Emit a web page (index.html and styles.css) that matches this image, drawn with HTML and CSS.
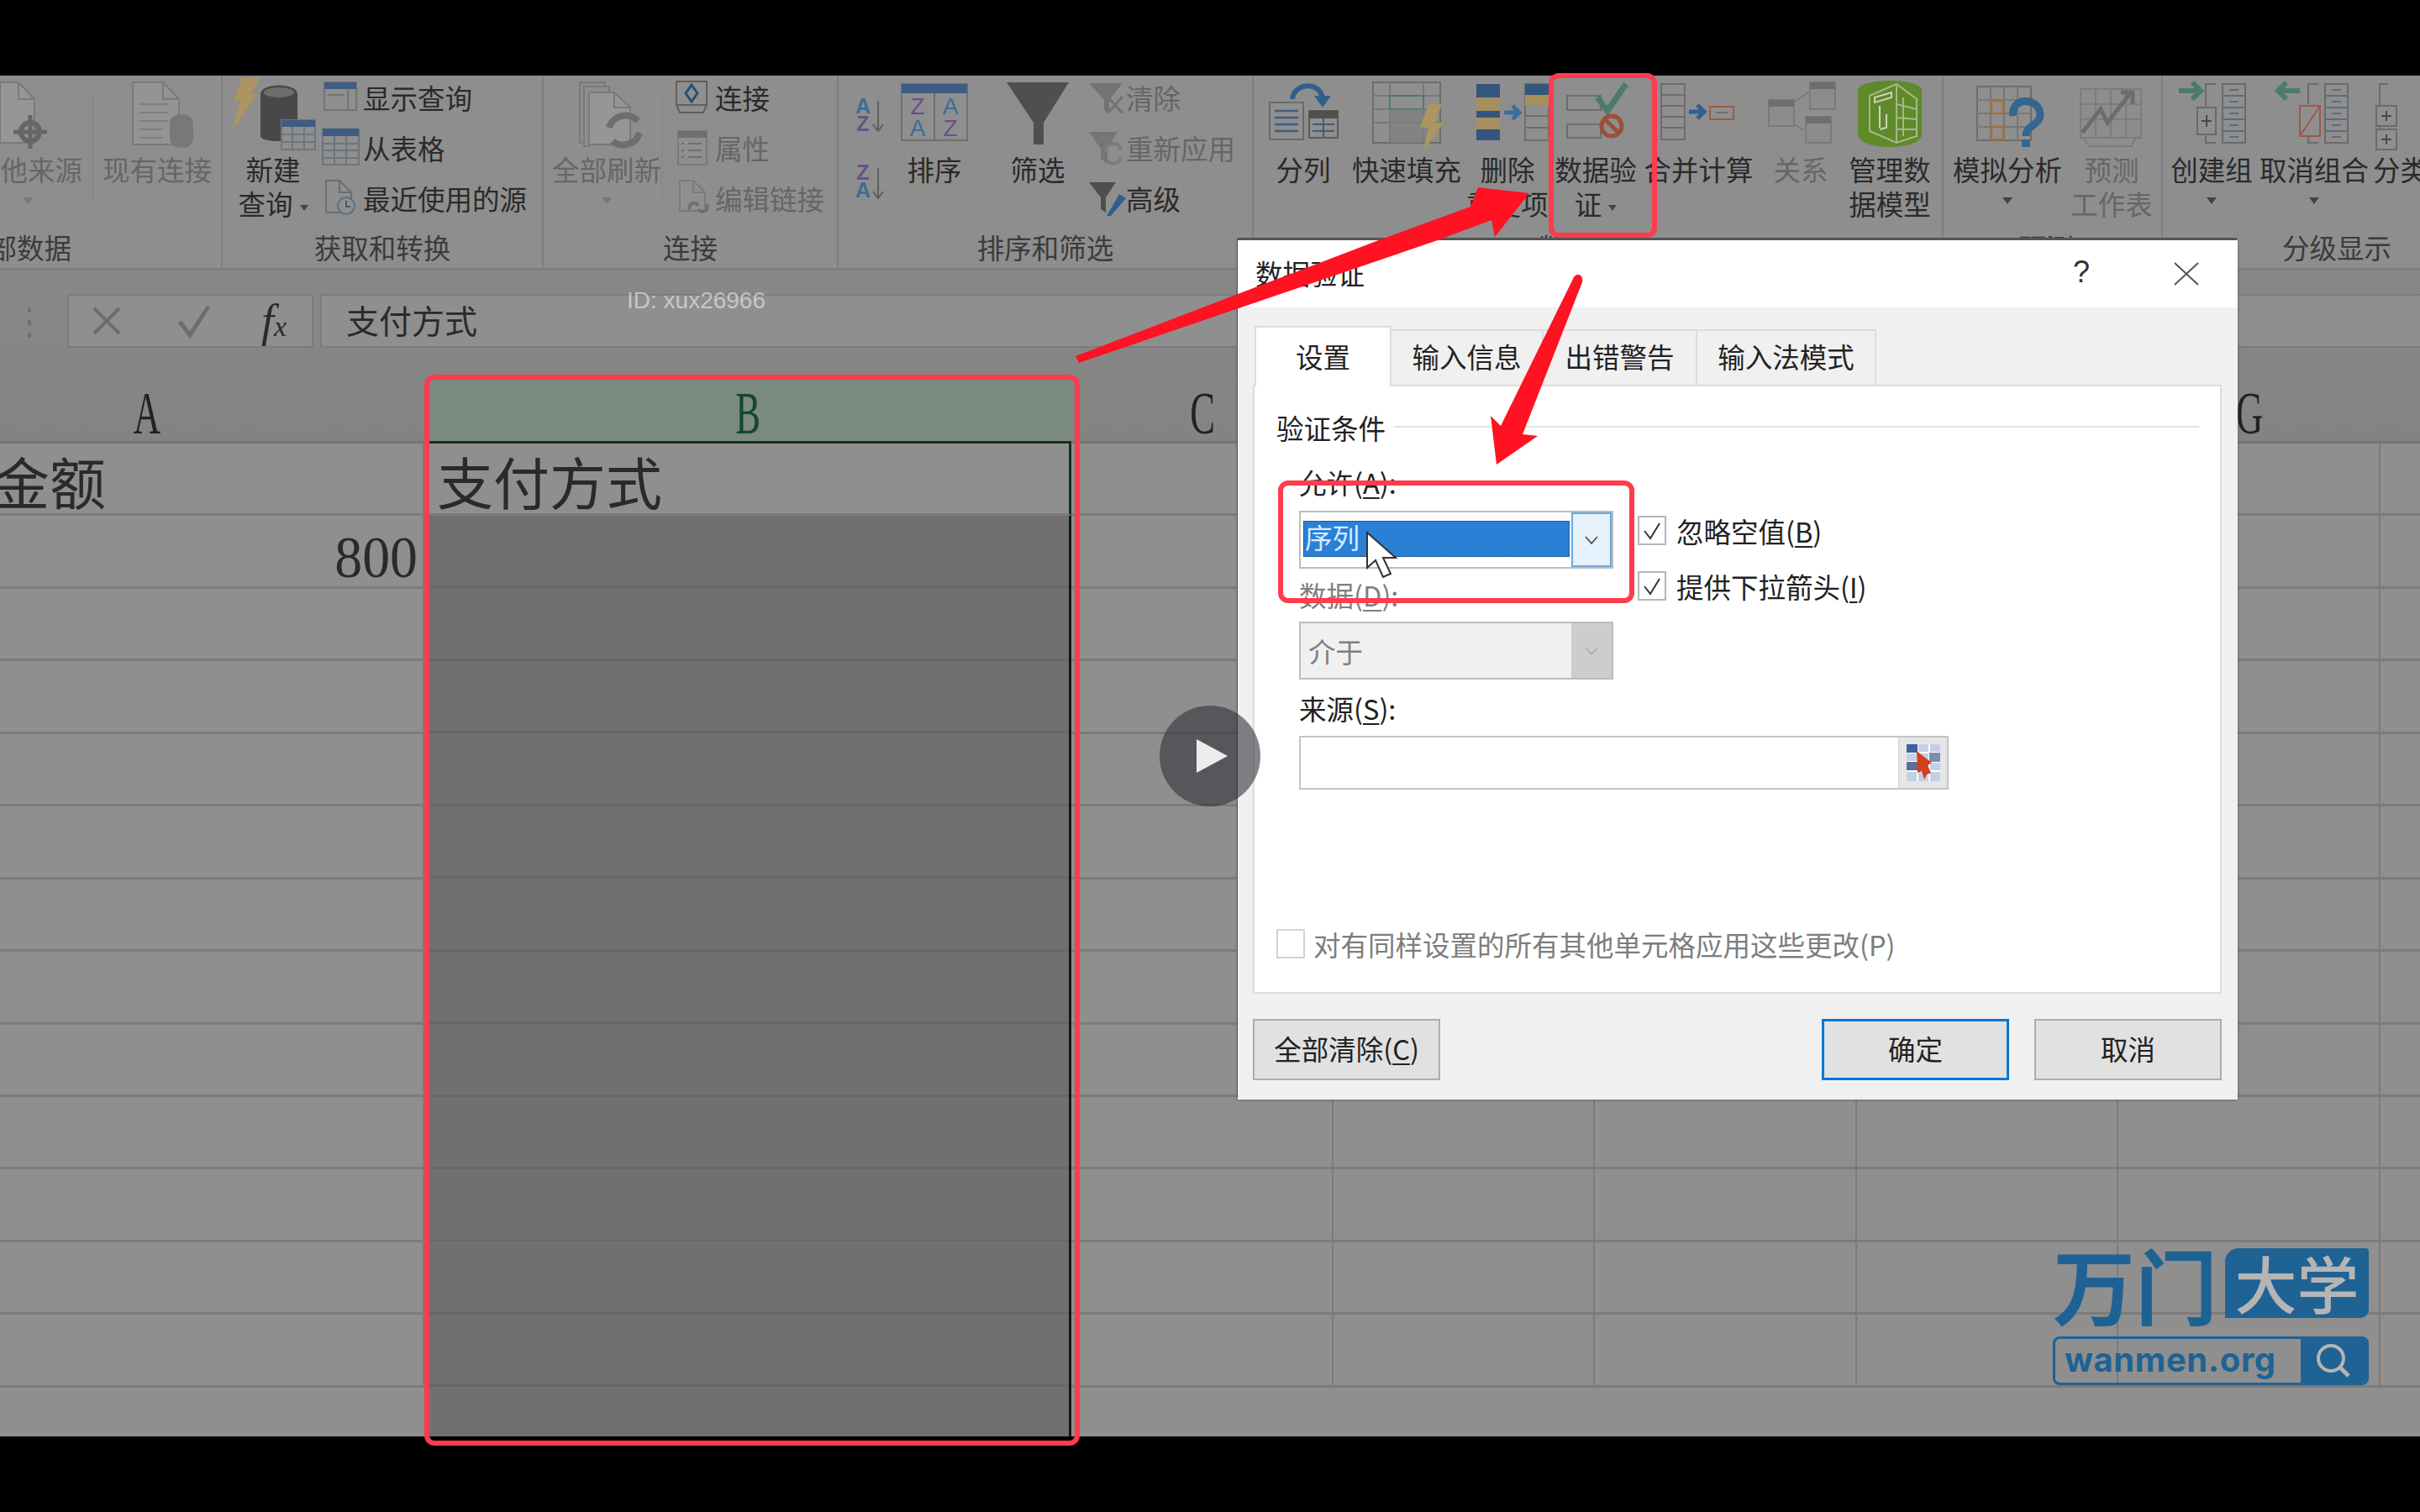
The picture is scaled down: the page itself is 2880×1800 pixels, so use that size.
FILE: index.html
```html
<!DOCTYPE html>
<html lang="zh-CN">
<head>
<meta charset="utf-8">
<title>数据验证</title>
<link rel="stylesheet" href="styles.css">
</head>
<body>
<div class="stage">
  <div class="bar"></div>
  <main class="video">
    <section class="ribbon">
      <div class="group g1">
        <div class="body">
          <div class="big w130 ml78 off"><svg width="130" height="90" viewBox="0 0 130 90"><path d="M32 8H54L73 28V80H32Z" fill="#979596" stroke="#7a7a7a" stroke-width="2"/><path d="M54 8V28H73" fill="none" stroke="#7a7a7a" stroke-width="2"/><circle cx="68" cy="67" r="11" fill="none" stroke="#666" stroke-width="6"/><path d="M68 47V87M48 67H88" stroke="#666" stroke-width="5"/></svg><span>其他来源</span><i class="caret"></i></div>
          <div class="vsep sep1"></div>
          <div class="big w130 off"><svg width="130" height="90" viewBox="0 0 130 90"><path d="M36 8H72L91 28V82H36Z" fill="#959394" stroke="#7a7a7a" stroke-width="2"/><path d="M72 8V28H91" fill="none" stroke="#7a7a7a" stroke-width="2"/><path d="M44 34H78M44 44H78M44 54H78M44 64H72M44 74H72" stroke="#7e7e7e" stroke-width="2"/><rect x="80" y="46" width="28" height="40" rx="12" fill="#787878"/></svg><span>现有连接</span></div>
        </div>
        <div class="label left">获取外部数据</div>
      </div>
      <div class="group g2">
        <div class="body">
          <div class="big w110 ml5"><svg width="110" height="90" viewBox="0 0 110 90"><path d="M18 2H40L28 22H36L6 66L16 30H8Z" fill="#ac9560"/><path d="M40 22C40 8 84 8 84 22V72C84 80 40 80 40 72Z" fill="#484848"/><ellipse cx="62" cy="20" rx="18" ry="6" fill="#6d6d6d"/><rect x="65" y="53" width="40" height="35" fill="#8f8f8f" stroke="#6d7580" stroke-width="2"/><rect x="65" y="53" width="40" height="8" fill="#3f5c82"/><path d="M65 70H105M65 79H105M78 61V88M92 61V88" stroke="#6d7580" stroke-width="2"/></svg><span>新建</span><span>查询<i class="tri"></i></span></div>
          <div class="stack">
            <div class="small"><svg width="50" height="44" viewBox="0 0 50 44"><rect x="4" y="5" width="38" height="33" fill="#8f8f8f" stroke="#747474" stroke-width="2"/><rect x="4" y="5" width="38" height="8" fill="#3f5c82"/><path d="M32 14V38M8 20H28" stroke="#747474" stroke-width="2"/></svg><span>显示查询</span></div>
            <div class="small"><svg width="50" height="44" viewBox="0 0 50 44"><rect x="2" y="0" width="43" height="43" fill="#8f8f8f" stroke="#6e747c" stroke-width="2"/><rect x="2" y="0" width="43" height="9" fill="#3f5c82"/><path d="M2 18H45M2 26H45M2 35H45M16 9V43M30 9V43" stroke="#6e747c" stroke-width="2"/></svg><span>从表格</span></div>
            <div class="small"><svg width="50" height="44" viewBox="0 0 50 44"><path d="M6 2H22L36 16V40H6Z" fill="#8f8f8f" stroke="#6e6e6e" stroke-width="2"/><path d="M22 2V16H36" fill="none" stroke="#6e6e6e" stroke-width="2"/><circle cx="30" cy="32" r="10" fill="#8f8f8f" stroke="#5c7288" stroke-width="2"/><path d="M30 26V33H35" fill="none" stroke="#555" stroke-width="2"/></svg><span>最近使用的源</span></div>
          </div>
        </div>
        <div class="label">获取和转换</div>
      </div>
      <div class="group g3">
        <div class="body">
          <div class="big w130 ml10 off"><svg width="130" height="90" viewBox="0 0 130 90"><path d="M33 8H63V14H39V80H33Z" fill="#8d8d8d" stroke="#7a7a7a" stroke-width="2"/><path d="M38 13H68V20H44V84H38Z" fill="#8d8d8d" stroke="#7a7a7a" stroke-width="2"/><path d="M44 20H74L93 38V82H44Z" fill="#979596" stroke="#7a7a7a" stroke-width="2"/><path d="M74 20V38H93" fill="none" stroke="#7a7a7a" stroke-width="2"/><path d="M68 62A20 20 0 0 1 102 54M104 68A20 20 0 0 1 72 78" fill="none" stroke="#6e6e6e" stroke-width="8"/></svg><span>全部刷新</span><i class="caret"></i></div>
          <div class="vsep sep3"></div>
          <div class="stack narrow">
            <div class="small"><svg width="50" height="44" viewBox="0 0 50 44"><rect x="4" y="4" width="36" height="28" fill="#8f8f8f" stroke="#5f5f5f" stroke-width="2"/><path d="M22 8L29 18L22 28L15 18Z" fill="none" stroke="#28506f" stroke-width="3"/><path d="M4 32H40L36 41H8Z" fill="#8f8f8f" stroke="#5f5f5f" stroke-width="2"/></svg><span>连接</span></div>
            <div class="small off"><svg width="50" height="44" viewBox="0 0 50 44"><rect x="6" y="3" width="34" height="40" fill="#8f8f8f" stroke="#7a7a7a" stroke-width="2"/><rect x="6" y="3" width="34" height="8" fill="#6f6f6f"/><path d="M18 18H34M18 26H34M18 34H34M10 18H13M10 26H13M10 34H13" stroke="#6f6f6f" stroke-width="2"/></svg><span>属性</span></div>
            <div class="small off"><svg width="50" height="44" viewBox="0 0 50 44"><path d="M8 2H24L38 16V38H8Z" fill="#8f8f8f" stroke="#7a7a7a" stroke-width="2"/><path d="M24 2V16H38" fill="none" stroke="#7a7a7a" stroke-width="2"/><path d="M20 36A5 5 0 0 1 30 32M40 30A5 5 0 0 1 30 36" fill="none" stroke="#6f6f6f" stroke-width="4"/></svg><span>编辑链接</span></div>
          </div>
        </div>
        <div class="label">连接</div>
      </div>
      <div class="group g4">
        <div class="body">
          <div class="sorts"><svg width="70" height="150" viewBox="0 0 70 150"><text x="29" y="45" class="az a">A</text><text x="29" y="66" class="az z">Z</text><path d="M47 30V65M41 58L47 66L53 58" fill="none" stroke="#5e5e5e" stroke-width="2"/><text x="29" y="124" class="az z">Z</text><text x="29" y="145" class="az a">A</text><path d="M47 110V145M41 138L47 146L53 138" fill="none" stroke="#5e5e5e" stroke-width="2"/></svg></div>
          <div class="big w88"><svg width="88" height="90" viewBox="0 0 88 90"><rect x="5" y="10" width="78" height="67" fill="#8f8f8f" stroke="#707070" stroke-width="2"/><rect x="5" y="10" width="78" height="11" fill="#3f5c82"/><path d="M44 21V77" stroke="#707070" stroke-width="2"/><text x="24" y="46" class="az z mid">Z</text><text x="63" y="46" class="az a mid">A</text><text x="24" y="72" class="az a mid">A</text><text x="63" y="72" class="az z mid">Z</text></svg><span>排序</span></div>
          <div class="vgap34"></div>
          <div class="big w90"><svg width="90" height="90" viewBox="0 0 90 90"><path d="M8 8H82L52 56V82H40V56Z" fill="#4f4f4f"/></svg><span>筛选</span></div>
          <div class="stack tight">
            <div class="small off"><svg width="46" height="44" viewBox="0 0 46 44"><path d="M2 6H42L26 26V42L20 38V26Z" fill="#737373"/><path d="M24 22L42 42M42 22L24 42" stroke="#737373" stroke-width="3"/></svg><span>清除</span></div>
            <div class="small off"><svg width="46" height="44" viewBox="0 0 46 44"><path d="M2 4H36L24 24V42L16 36V24Z" fill="#757575"/><path d="M22 28A9 9 0 0 1 40 26M40 34A9 9 0 0 1 24 38" fill="none" stroke="#7c7c7c" stroke-width="4"/></svg><span>重新应用</span></div>
            <div class="small"><svg width="46" height="44" viewBox="0 0 46 44"><path d="M2 4H34L22 22V40L16 36V22Z" fill="#4f4f4f"/><path d="M38 18L46 23L28 44L22 46Z" fill="#2f5f8c"/></svg><span>高级</span></div>
          </div>
        </div>
        <div class="label">排序和筛选</div>
      </div>
      <div class="group g5">
        <div class="body">
          <div class="big w110 ml4"><svg width="110" height="90" viewBox="0 0 110 90"><rect x="15" y="32" width="40" height="44" fill="#8f8f8f" stroke="#6a6a6a" stroke-width="2"/><path d="M21 42H49M21 50H49M21 58H49M21 66H49" stroke="#3f5c82" stroke-width="2.5"/><rect x="62" y="42" width="34" height="32" fill="#8f8f8f" stroke="#5a5a5a" stroke-width="2"/><rect x="62" y="42" width="34" height="9" fill="#4f4f4f"/><path d="M66 58H92M66 66H92M79 51V74" stroke="#3f5c82" stroke-width="2"/><path d="M42 28C44 8 76 6 78 28" fill="none" stroke="#2f5f8c" stroke-width="6"/><path d="M68 24H88L78 38Z" fill="#2f5f8c"/></svg><span>分列</span></div>
          <div class="big w136"><svg width="136" height="90" viewBox="0 0 136 90"><rect x="28" y="8" width="80" height="72" fill="#8f8f8f" stroke="#6c6c6c" stroke-width="2"/><path d="M28 24H108M28 40H108M28 56H108M48 8V80M88 8V80" stroke="#787878" stroke-width="2"/><rect x="48" y="24" width="40" height="16" fill="none" stroke="#4e7a68" stroke-width="2"/><rect x="48" y="40" width="50" height="40" fill="#7e7e7e" opacity=".7"/><path d="M94 34H110L102 56H112L88 90L94 62H84Z" fill="#ac9560"/></svg><span>快速填充</span></div>
          <div class="big w104"><svg width="104" height="90" viewBox="0 0 104 90"><rect x="15" y="10" width="28" height="67" fill="#34567e"/><rect x="15" y="26" width="28" height="16" fill="#a58f5c"/><rect x="15" y="50" width="28" height="14" fill="#a58f5c"/><path d="M48 44H64M58 36L66 44L58 52" fill="none" stroke="#3a6f9e" stroke-width="5"/><rect x="73" y="10" width="28" height="67" fill="#8f8f8f" stroke="#6d6d6d" stroke-width="2"/><rect x="73" y="10" width="28" height="13" fill="#34567e"/><rect x="73" y="23" width="28" height="13" fill="#a58f5c"/><path d="M73 48H101M73 62H101" stroke="#6d6d6d" stroke-width="2"/></svg><span>删除</span><span>重复项</span></div>
          <div class="big w116 mln5"><svg width="116" height="90" viewBox="0 0 116 90"><rect x="24" y="24" width="40" height="17" fill="none" stroke="#6d6d6d" stroke-width="2"/><rect x="24" y="58" width="40" height="16" fill="none" stroke="#6d6d6d" stroke-width="2"/><path d="M60 26L72 42L94 10" fill="none" stroke="#4e7a68" stroke-width="7"/><circle cx="77" cy="60" r="12" fill="none" stroke="#9c4f38" stroke-width="5"/><path d="M69 52L85 68" stroke="#9c4f38" stroke-width="5"/></svg><span>数据验</span><span>证<i class="tri"></i></span></div>
          <div class="big w129"><svg width="124" height="90" viewBox="0 0 124 90"><rect x="17" y="10" width="28" height="66" fill="#8f8f8f" stroke="#6d6d6d" stroke-width="2"/><path d="M17 23H45M17 36H45M17 49H45M17 62H45" stroke="#6d6d6d" stroke-width="2"/><path d="M50 43H66M60 35L68 43L60 51" fill="none" stroke="#2f5f8c" stroke-width="5"/><rect x="75" y="37" width="28" height="15" fill="#8f8f8f" stroke="#9c5a48" stroke-width="2"/><path d="M82 44H96" stroke="#6e6e6e" stroke-width="2"/></svg><span>合并计算</span></div>
          <div class="big w114 off"><svg width="114" height="90" viewBox="0 0 114 90"><path d="M30 45L66 20M30 45L60 65" stroke="#797979" stroke-width="2"/><rect x="19" y="29" width="30" height="31" fill="#8c8c8c" stroke="#7a7a7a" stroke-width="2"/><rect x="19" y="29" width="30" height="8" fill="#6e6e6e"/><rect x="68" y="8" width="30" height="32" fill="#8c8c8c" stroke="#7a7a7a" stroke-width="2"/><rect x="68" y="8" width="30" height="8" fill="#6e6e6e"/><rect x="63" y="49" width="30" height="31" fill="#8c8c8c" stroke="#7a7a7a" stroke-width="2"/><rect x="63" y="49" width="30" height="8" fill="#6e6e6e"/></svg><span>关系</span></div>
          <div class="big w112 mln7"><svg width="112" height="90" viewBox="0 0 112 90"><path d="M18 18C18 2 94 2 94 18V70C94 90 18 90 18 70Z" fill="#5f8a2a"/><path d="M32 24L64 10L88 28V72L64 80L32 66Z" fill="none" stroke="#a5b88c" stroke-width="2"/><path d="M64 12V80M64 34L88 40M64 50L88 52M64 64L88 64M72 26V72" stroke="#a5b88c" stroke-width="2"/><path d="M38 26L58 20V26L38 32ZM44 36V62M52 46V62L44 64" fill="none" stroke="#cbd4bd" stroke-width="2"/></svg><span>管理数</span><span>据模型</span></div>
        </div>
        <div class="label lbl-tools">数据工具</div>
      </div>
      <div class="group g6">
        <div class="body">
          <div class="big w138 ml7"><svg width="138" height="90" viewBox="0 0 138 90"><rect x="33" y="13" width="64" height="64" fill="#8f8f8f" stroke="#6d6d6d" stroke-width="2"/><path d="M33 29H97M33 45H97M33 61H97M49 13V77M65 13V77M81 13V77" stroke="#777" stroke-width="2"/><rect x="50" y="30" width="14" height="15" fill="none" stroke="#a5703a" stroke-width="2.5"/><rect x="50" y="61" width="14" height="15" fill="none" stroke="#a5703a" stroke-width="2.5"/><path d="M76 48C72 26 106 24 108 46C108 60 91 58 91 72" fill="none" stroke="#34668f" stroke-width="9"/><rect x="86" y="76" width="10" height="9" fill="#34668f"/></svg><span>模拟分析</span><i class="caret dark"></i></div>
          <div class="big w110 off"><svg width="110" height="90" viewBox="0 0 110 90"><rect x="18" y="16" width="72" height="58" fill="#8d8d8d" stroke="#7c7c7c" stroke-width="2"/><path d="M18 34H90M18 52H90M36 16V74M54 16V74M72 16V74" stroke="#7c7c7c" stroke-width="2"/><path d="M20 68L42 40L50 56L78 20M66 20H80V34" fill="none" stroke="#6c6c6c" stroke-width="5"/><path d="M22 74H84L78 84H28Z" fill="none" stroke="#7c7c7c" stroke-width="2"/></svg><span>预测</span><span>工作表</span></div>
        </div>
        <div class="label lbl-fore">预测</div>
      </div>
      <div class="group g7">
        <div class="body">
          <div class="big w122 mln3"><svg width="122" height="90" viewBox="0 0 122 90"><path d="M22 18H46M38 8L48 18L38 28" fill="none" stroke="#4e7a68" stroke-width="6"/><path d="M66 10H54V36M54 72V80H66" fill="none" stroke="#6a6a6a" stroke-width="2"/><rect x="44" y="38" width="22" height="32" fill="#8f8f8f" stroke="#6a6a6a" stroke-width="2"/><path d="M49 54H61M55 47V61" stroke="#4a4a4a" stroke-width="2"/><rect x="74" y="10" width="27" height="70" fill="#8f8f8f" stroke="#6a6a6a" stroke-width="2"/><path d="M74 24H101M74 38H101M74 52H101M74 66H101M82 17H93M82 31H93M82 45H93M82 59H93M82 73H93" stroke="#5e6c7c" stroke-width="2"/></svg><span>创建组</span><i class="caret dark"></i></div>
          <div class="big w122"><svg width="122" height="90" viewBox="0 0 122 90"><path d="M44 18H20M28 8L18 18L28 28" fill="none" stroke="#4e7a68" stroke-width="6"/><path d="M66 10H54V34M54 72V80H66" fill="none" stroke="#6a6a6a" stroke-width="2"/><rect x="44" y="36" width="24" height="36" fill="#8f8f8f" stroke="#9c5a48" stroke-width="2"/><path d="M44 72L68 36" stroke="#9c5a48" stroke-width="2"/><rect x="74" y="10" width="27" height="70" fill="#8f8f8f" stroke="#6a6a6a" stroke-width="2"/><path d="M74 24H101M74 38H101M74 52H101M74 66H101M82 17H93M82 31H93M82 45H93M82 59H93M82 73H93" stroke="#5e6c7c" stroke-width="2"/></svg><span>取消组合</span><i class="caret dark"></i></div>
          <div class="big w130 left-text ml9"><svg width="130" height="90" viewBox="0 0 130 90"><path d="M18 10H8V80H18" fill="none" stroke="#6a6a6a" stroke-width="2"/><rect x="4" y="36" width="24" height="24" fill="#8f8f8f" stroke="#6a6a6a" stroke-width="2"/><rect x="4" y="64" width="24" height="24" fill="#8f8f8f" stroke="#6a6a6a" stroke-width="2"/><path d="M10 48H22M16 42V54M10 76H22M16 70V82" stroke="#4a4a4a" stroke-width="2"/></svg><span>分类汇总</span></div>
        </div>
        <div class="label lbl-outline">分级显示</div>
      </div>
    </section>

    <section class="formula">
      <div class="grip"><i></i><i></i><i></i></div>
      <div class="fx-box">
        <svg width="50" height="50" viewBox="0 0 50 50"><path d="M10 10L40 40M40 10L10 40" stroke="#6d6d6d" stroke-width="4"/></svg>
        <svg width="50" height="50" viewBox="0 0 50 50"><path d="M8 26L20 42L42 8" fill="none" stroke="#6d6d6d" stroke-width="5"/></svg>
        <span class="fx">f<small>x</small></span>
      </div>
      <div class="fx-input">支付方式</div>
    </section>

    <section class="sheet">
      <div class="hd"><span>A</span></div>
      <div class="hd sel"><span>B</span></div>
      <div class="hd"><span>C</span></div>
      <div class="hd"><span>D</span></div>
      <div class="hd"><span>E</span></div>
      <div class="hd"><span>F</span></div>
      <div class="hd"><span>G</span></div>
      <div class="hd"><span>H</span></div>

      <div class="cell cjk clip">金额</div>
      <div class="cell cjk bcell">支付方式</div>
      <div class="cell"></div><div class="cell"></div><div class="cell"></div><div class="cell"></div><div class="cell"></div><div class="cell"></div>

      <div class="cell num"><span>800</span></div>
      <div class="bcol"></div>
      <div class="cell"></div><div class="cell"></div><div class="cell"></div><div class="cell"></div><div class="cell"></div><div class="cell"></div>
      <div class="cell"></div><div class="cell"></div><div class="cell"></div><div class="cell"></div><div class="cell"></div><div class="cell"></div><div class="cell"></div>
      <div class="cell"></div><div class="cell"></div><div class="cell"></div><div class="cell"></div><div class="cell"></div><div class="cell"></div><div class="cell"></div>
      <div class="cell"></div><div class="cell"></div><div class="cell"></div><div class="cell"></div><div class="cell"></div><div class="cell"></div><div class="cell"></div>
      <div class="cell"></div><div class="cell"></div><div class="cell"></div><div class="cell"></div><div class="cell"></div><div class="cell"></div><div class="cell"></div>
      <div class="cell"></div><div class="cell"></div><div class="cell"></div><div class="cell"></div><div class="cell"></div><div class="cell"></div><div class="cell"></div>
      <div class="cell"></div><div class="cell"></div><div class="cell"></div><div class="cell"></div><div class="cell"></div><div class="cell"></div><div class="cell"></div>
      <div class="cell"></div><div class="cell"></div><div class="cell"></div><div class="cell"></div><div class="cell"></div><div class="cell"></div><div class="cell"></div>
      <div class="cell"></div><div class="cell"></div><div class="cell"></div><div class="cell"></div><div class="cell"></div><div class="cell"></div><div class="cell"></div>
      <div class="cell"></div><div class="cell"></div><div class="cell"></div><div class="cell"></div><div class="cell"></div><div class="cell"></div><div class="cell"></div>
      <div class="cell"></div><div class="cell"></div><div class="cell"></div><div class="cell"></div><div class="cell"></div><div class="cell"></div><div class="cell"></div>
      <div class="cell"></div><div class="cell"></div><div class="cell"></div><div class="cell"></div><div class="cell"></div><div class="cell"></div><div class="cell"></div>
    </section>
  </main>
  <div class="bar"></div>

  <div class="watermark">ID: xux26966</div>

  <aside class="dialog">
    <header class="d-title"><span>数据验证</span><span class="help">?</span><svg class="close" width="30" height="28" viewBox="0 0 30 28"><path d="M1 1L29 27M29 1L1 27" stroke="#555" stroke-width="2"/></svg></header>
    <div class="d-body">
      <nav class="tabs">
        <div class="tab on">设置</div>
        <div class="tab t2">输入信息</div>
        <div class="tab t3">出错警告</div>
        <div class="tab t4">输入法模式</div>
      </nav>
      <div class="panel">
        <div class="legend"><span>验证条件</span><i></i></div>
        <div class="row-top">
          <div class="fields">
            <label class="f-label">允许(<u>A</u>):</label>
            <div class="combo">
              <div class="combo-val"><span>序列</span></div>
              <div class="combo-btn"><svg width="16" height="10" viewBox="0 0 16 10"><path d="M1 1L8 9L15 1" fill="none" stroke="#444" stroke-width="1.6"/></svg></div>
            </div>
            <label class="f-label dis">数据(<u>D</u>):</label>
            <div class="combo off-c">
              <div class="combo-val"><span>介于</span></div>
              <div class="combo-btn"><svg width="16" height="10" viewBox="0 0 16 10"><path d="M1 1L8 9L15 1" fill="none" stroke="#aaa" stroke-width="1.6"/></svg></div>
            </div>
          </div>
          <div class="checks">
            <div class="chk-row"><div class="chk"><svg width="24" height="22" viewBox="0 0 24 22"><path d="M3 11L10 20L21 2" fill="none" stroke="#333" stroke-width="2"/></svg></div><span>忽略空值(<u>B</u>)</span></div>
            <div class="chk-row"><div class="chk"><svg width="24" height="22" viewBox="0 0 24 22"><path d="M3 11L10 20L21 2" fill="none" stroke="#333" stroke-width="2"/></svg></div><span>提供下拉箭头(<u>I</u>)</span></div>
          </div>
        </div>
        <label class="f-label src">来源(<u>S</u>):</label>
        <div class="source">
          <div class="source-in"></div>
          <div class="source-btn"><svg width="40" height="44" viewBox="0 0 40 44"><rect width="40" height="44" fill="#c6d0e4"/><path d="M0 10H40M0 21H40M0 32H40M13 0V44M27 0V44" stroke="#fff" stroke-width="2"/><rect width="13" height="10" fill="#3f5f9f"/><rect x="0" y="21" width="13" height="10" fill="#5a6f9a"/><rect x="27" y="10" width="13" height="11" fill="#7b8fb5"/><path d="M12 8L30 22L25 25L29 34L24 36L21 42L18 32L13 34Z" fill="#d2401c"/></svg></div>
        </div>
        <div class="apply"><div class="chk blank"></div><span>对有同样设置的所有其他单元格应用这些更改(P)</span></div>
      </div>
      <footer class="d-foot">
        <button class="btn">全部清除(<u>C</u>)</button>
        <div class="foot-right">
          <button class="btn primary">确定</button>
          <button class="btn">取消</button>
        </div>
      </footer>
    </div>
  </aside>

  <svg class="cursor" width="44" height="60" viewBox="0 0 44 60"><path d="M2 2V44L12 35L21 55L30 51L21 32H36Z" fill="#fff" stroke="#333" stroke-width="2"/></svg>

  <button class="play" aria-label="播放"><svg width="38" height="40" viewBox="0 0 38 40"><path d="M0 0L37 20L0 40Z" fill="#ececec"/></svg></button>

  <div class="brand">
    <div class="brand-top"><span class="wm">万门</span><span class="dx">大学</span></div>
    <div class="brand-search"><span>wanmen.org</span><div class="lens"><svg width="46" height="46" viewBox="0 0 46 46"><circle cx="20" cy="20" r="15" fill="none" stroke="#b5b5b5" stroke-width="4"/><path d="M31 31L41 41" stroke="#b5b5b5" stroke-width="5"/></svg></div></div>
  </div>

  <div class="hl hl-b"></div>
  <div class="hl hl-tool"></div>
  <div class="hl hl-combo"></div>
  <svg class="arrows" width="2880" height="1800" viewBox="0 0 2880 1800"><path d="M1280 424L1638 287L1750 246L1759 223L1820 230L1779 282L1775 262L1708 287L1284 432Z" fill="#ff1222"/><path d="M1872 332C1875 324 1885 326 1883 336L1812 517L1830 519L1781 553L1774 495L1786 507Z" fill="#ff1222"/></svg>
</div>
</body>
</html>
```
FILE: styles.css
```css
* { box-sizing: border-box; }
html, body { margin: 0; padding: 0; background: #000; }
body { font-family: "Noto Sans CJK SC", "Noto Sans", sans-serif; color: #2a2a2a; }
u { text-decoration-thickness: 2px; text-underline-offset: 4px; }
.stage { position: relative; width: 2880px; height: 1800px; overflow: hidden; display: flex; flex-direction: column; background: #000; }
.bar { flex: 0 0 90px; background: #000; }
.video { flex: 0 0 1620px; overflow: hidden; display: flex; flex-direction: column; background: #8f8f8f; }

/* ribbon */
.ribbon { flex: 0 0 232px; display: flex; background: #8e8e8e; border-bottom: 3px solid #7f7f7f; font-size: 32.5px; }
.group { flex: none; height: 229px; position: relative; display: flex; flex-direction: column; border-right: 2px solid #7e7e7e; }
.g1 { margin-left: -110px; width: 375px; }
.g2 { width: 382px; }
.g3 { width: 351px; }
.g4 { width: 494px; }
.g5 { width: 821px; }
.g6 { width: 261px; }
.g7 { width: 500px; border-right: 0; }
.body { display: flex; height: 184px; flex: none; }
.label { height: 40px; line-height: 40px; text-align: center; color: #3b3b3b; white-space: nowrap; }
.label.left { text-align: left; }
.lbl-tools { margin-left: -12px; }
.lbl-fore { margin-left: -15px; }
.lbl-outline { width: 414px; }
.big { display: flex; flex-direction: column; align-items: center; flex: none; line-height: 41px; white-space: nowrap; color: #2a2a2a; }
.big svg { display: block; flex: none; }
.big span { display: block; height: 41px; }
.off, .off .label { color: #666; }
.w88 { width: 88px; } .w90 { width: 90px; } .w104 { width: 104px; } .w110 { width: 110px; } .w112 { width: 112px; } .w114 { width: 114px; } .w116 { width: 116px; } .w122 { width: 122px; } .w129 { width: 129px; } .w130 { width: 130px; } .w136 { width: 136px; } .w138 { width: 138px; }
.ml4 { margin-left: 4px; } .ml5 { margin-left: 5px; } .ml7 { margin-left: 7px; } .ml9 { margin-left: 9px; } .ml10 { margin-left: 10px; } .ml78 { margin-left: 78px; }
.mln3 { margin-left: -3px; } .mln5 { margin-left: -5px; } .mln7 { margin-left: -7px; }
.left-text { align-items: flex-start; }
.vsep { flex: none; width: 1px; height: 130px; margin-top: 20px; background: #858585; }
.sep1 { margin-left: 12px; margin-right: 11px; }
.caret { display: block; width: 0; height: 0; margin-top: 14px; border: 6px solid transparent; border-top: 8px solid #777; border-bottom: 0; }
.caret.dark { border-top-color: #444; }
.tri { display: inline-block; width: 0; height: 0; margin-left: 8px; vertical-align: middle; border: 5px solid transparent; border-top: 7px solid #444; border-bottom: 0; }
.stack { display: flex; flex-direction: column; gap: 16px; padding-top: 3px; margin-left: 2px; flex: none; }
.stack.narrow { margin-left: 13px; }
.stack.tight { margin-left: 14px; }
.small { display: flex; align-items: center; height: 44px; white-space: nowrap; color: #2a2a2a; }
.small svg { flex: none; }
.small.off { color: #666; }
.sorts { flex: none; width: 70px; }
.sorts svg { display: block; }
.vgap34 { flex: none; width: 34px; }
.az { font-family: "Liberation Sans", sans-serif; font-size: 25px; font-weight: 700; text-anchor: middle; }
.az.mid { font-size: 28px; font-weight: 400; }
.az.a { fill: #3f6c94; }
.az.z { fill: #6b4f86; }

/* formula bar */
.formula { flex: 0 0 126px; display: flex; align-items: flex-start; padding: 28px 0 0 33px; background: linear-gradient(#888, #858585); }
.grip { width: 7px; margin-top: 16px; display: flex; flex-direction: column; gap: 9px; }
.grip i { display: block; width: 4px; height: 6px; background: #6f6f6f; }
.fx-box { margin-left: 40px; width: 293px; height: 64px; display: flex; align-items: center; justify-content: space-between; padding: 0 30px 0 20px; background: #8f8f8f; border: 2px solid #7c7c7c; }
.fx { font-family: "Liberation Serif", serif; font-style: italic; font-size: 54px; line-height: 1; color: #2a2a2a; }
.fx small { font-size: 34px; }
.fx-input { margin-left: 8px; flex: 1; height: 64px; padding-left: 29px; font-size: 39px; line-height: 57px; color: #2a2a2a; background: #8f8f8f; border: 2px solid #7c7c7c; border-right: 0; }

/* sheet */
.sheet { flex: 1; display: grid; grid-template-columns: 505px 770px 311.5px 311.5px 311.5px 311.5px 311.5px 311.5px; grid-template-rows: 80px repeat(14, 86.45px); background: #8f8f8f; }
.hd { display: flex; align-items: center; justify-content: center; background: linear-gradient(#868686, #838383); border-bottom: 3px solid #757575; font-family: "Liberation Serif", serif; font-size: 72px; color: #222; }
.hd span { display: block; transform: scaleX(.62); margin-top: 11px; }
.hd:first-child span { transform: scaleX(.62) translateX(-126px); }
.hd.sel { background: #7a8a80; border-bottom-color: #16301f; color: #14482c; }
.cell { border-right: 2px solid #7b7b7b; border-bottom: 3px solid #7b7b7b; overflow: hidden; }
.cjk { font-size: 67px; line-height: 87px; color: #2a2a2a; white-space: nowrap; }
.clip { text-indent: -8px; }
.bcell { padding-left: 15px; background: #8f8f8f; border-right: 3px solid #16301f; }
.num { font-family: "Liberation Serif", serif; font-size: 70px; line-height: 100px; text-align: right; padding-right: 6px; color: #2a2a2a; }
.num span { display: inline-block; transform: scaleX(.94); transform-origin: right; }
.bcol { grid-column: 2; grid-row: 3 / span 13; background: repeating-linear-gradient(#707070 0, #707070 83.45px, #676767 83.45px, #676767 86.45px); border-right: 3px solid #0d1a12; }

.watermark { position: absolute; left: 746px; top: 340px; font-family: "Liberation Sans", sans-serif; font-size: 28px; line-height: 36px; color: rgba(255, 255, 255, .5); }

/* dialog */
.dialog { position: absolute; left: 1473px; top: 286px; width: 1190px; height: 1023px; display: flex; flex-direction: column; background: #f0f0f0; box-shadow: -1px -3px 0 #555, 0 0 3px #555; font-size: 32.5px; color: #222; }
.d-title { flex: 0 0 80px; background: #fff; display: flex; align-items: center; padding: 0 46px 4px 21px; }
.d-title .help { margin-left: auto; margin-right: 100px; font-family: "Liberation Sans", sans-serif; font-size: 36px; color: #333; }
.d-title svg.close { flex: none; margin-top: 4px; }
.d-body { flex: 1; padding: 22px 19px 23px 18px; display: flex; flex-direction: column; }
.tabs { flex: 0 0 70px; display: flex; align-items: flex-end; padding-left: 2px; }
.tab { height: 66px; line-height: 60px; text-align: center; background: #f0f0f0; border: 2px solid #dcdcdc; border-left: 0; border-bottom: 0; }
.tab.on { height: 72px; line-height: 68px; width: 163px; background: #fff; border-left: 2px solid #dcdcdc; margin-bottom: -2px; position: relative; z-index: 1; }
.t2 { width: 181px; } .t3 { width: 183px; } .t4 { width: 213px; }
.panel { flex: 0 0 725px; background: #fff; border: 2px solid #dcdcdc; padding: 24px 25px 0 26px; display: flex; flex-direction: column; }
.legend { display: flex; align-items: center; height: 48px; color: #222; }
.legend i { flex: 1; height: 2px; margin-left: 10px; background: #e2e2e2; }
.row-top { display: flex; }
.fields { margin-left: 27px; padding-top: 17px; width: 374px; flex: none; }
.f-label { display: block; height: 59px; line-height: 50px; color: #222; }
.f-label.dis { height: 63px; line-height: 62px; color: #7f7f7f; }
.f-label.src { margin-left: 27px; height: 67px; line-height: 68px; }
.combo { display: flex; height: 69px; background: #fff; border: 2px solid #bdbdbd; }
.combo-val { flex: 1; padding: 10px 2px 12px 3px; }
.combo-val span { display: block; height: 43px; line-height: 38px; padding-left: 2px; background: #2a80d5; color: #d6ecff; outline: 1px dotted #123a63; outline-offset: -1px; }
.combo-btn { flex: 0 0 48px; display: flex; align-items: center; justify-content: center; background: #e5f1fb; border: 2px solid #6ea8d8; }
.off-c { background: #f0f0f0; color: #7f7f7f; }
.off-c .combo-val { padding: 0 0 0 7px; }
.off-c .combo-val span { background: none; color: #7f7f7f; outline: 0; height: 65px; line-height: 65px; }
.off-c .combo-btn { background: #cdcdcd; border: 0; }
.checks { margin-left: 29px; padding-top: 82px; display: flex; flex-direction: column; gap: 31px; flex: none; }
.chk-row { display: flex; align-items: center; gap: 12px; height: 35px; white-space: nowrap; }
.chk { width: 34px; height: 35px; display: flex; align-items: center; justify-content: center; background: #fff; border: 2px solid #b5b5b5; flex: none; }
.chk.blank { border-color: #d3d3d3; }
.source { display: flex; margin-left: 27px; width: 773px; height: 64px; border: 2px solid #c4c4c4; background: #fff; }
.source-in { flex: 1; }
.source-btn { flex: 0 0 58px; display: flex; align-items: center; justify-content: center; background: #e6e6e6; border-left: 1px solid #cfcfcf; }
.apply { margin-top: 160px; display: flex; align-items: center; gap: 10px; color: #7d7d7d; white-space: nowrap; }
.d-foot { flex: 1; display: flex; justify-content: space-between; align-items: flex-end; }
.foot-right { display: flex; gap: 30px; }
.btn { width: 223px; height: 73px; padding: 0 0 4px; font: inherit; color: #222; background: #e1e1e1; border: 2px solid #adadad; }
.btn.primary { border: 3px solid #0078d7; }

.cursor { position: absolute; left: 1625px; top: 632px; }
.play { position: absolute; left: 1380px; top: 840px; width: 120px; height: 120px; padding: 0 0 0 6px; border: 0; border-radius: 50%; background: rgba(46, 50, 56, .6); display: flex; align-items: center; justify-content: center; }

/* brand */
.brand { position: absolute; left: 2443px; top: 1486px; width: 376px; display: flex; flex-direction: column; gap: 22px; }
.brand-top { display: flex; height: 83px; justify-content: space-between; align-items: center; }
.wm { font-weight: 700; font-size: 98px; line-height: 83px; color: #1e6294; }
.dx { width: 171px; height: 83px; border-radius: 16px 4px 10px 0; background: #1f6294; color: #b5b5b5; font-weight: 500; font-size: 74px; line-height: 80px; text-align: center; }
.brand-search { height: 58px; display: flex; border: 3px solid #1f6294; border-radius: 8px; overflow: hidden; font-family: "Inter", sans-serif; font-weight: 700; font-size: 40px; color: #1f6294; }
.brand-search span { flex: 1; padding-left: 11px; line-height: 50px; letter-spacing: .6px; }
.lens { flex: 0 0 78px; display: flex; align-items: center; justify-content: center; background: #1f6294; }

/* annotations */
.hl { position: absolute; border: 6px solid #ff3b4e; border-radius: 12px; }
.hl-b { left: 505px; top: 446px; width: 780px; height: 1275px; }
.hl-tool { left: 1843px; top: 87px; width: 129px; height: 196px; }
.hl-combo { left: 1521px; top: 572px; width: 424px; height: 146px; }
.arrows { position: absolute; left: 0; top: 0; }
```
